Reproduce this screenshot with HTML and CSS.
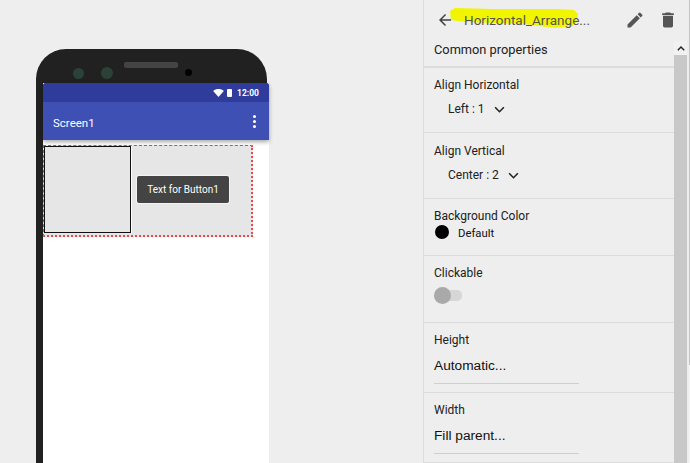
FILE: index.html
```html
<!DOCTYPE html>
<html>
<head>
  <meta charset="utf-8">
  <title>Horizontal Arrangement properties</title>
  <link rel="stylesheet" href="styles.css">
</head>
<body>
  <div class="stage">
    <div class="phone">
      <div class="bezel">
        <span class="cam cam-small"></span>
        <span class="cam cam-big"></span>
        <span class="speaker"></span>
        <span class="lens"></span>
      </div>
      <div class="screen">
        <div class="appbar">
          <div class="statusbar">
            <svg class="wifi" viewBox="0 0 12 9"><path d="M0 2.2C3.4-.7 8.6-.7 12 2.2L6 9z"/></svg>
            <span class="battery"></span>
            <span class="clock">12:00</span>
          </div>
          <div class="toolbar">
            <span class="screen-title">Screen1</span>
            <span class="dots"><i></i><i></i><i></i></span>
          </div>
        </div>
        <div class="arrangement">
          <div class="inner-box"></div>
          <div class="mock-btn">Text for Button1</div>
        </div>
      </div>
    </div>
  </div>

  <div class="panel">
    <div class="panel-head">
      <svg class="head-icon back" viewBox="0 0 24 24"><path d="M20 11H7.83l5.59-5.59L12 4l-8 8 8 8 1.41-1.41L7.83 13H20z"/></svg>
      <span class="comp-name">
        <svg class="marker" viewBox="0 0 132 26"><path d="M2 6L7 3 45 4 110 4 126 5 130 9 128 18 124 21 107 23 76 19 18 17 3 15z"/></svg>
        <span class="comp-text">Horizontal_Arrange...</span>
      </span>
      <svg class="head-icon edit" viewBox="0 0 24 24"><path d="M3 17.25V21h3.75L17.81 9.94l-3.75-3.75L3 17.25zM20.71 7.04a1 1 0 0 0 0-1.41l-2.34-2.34a1 1 0 0 0-1.41 0l-1.83 1.83 3.75 3.75 1.83-1.83z"/></svg>
      <svg class="head-icon trash" viewBox="0 0 24 24"><path d="M6 19c0 1.1.9 2 2 2h8c1.1 0 2-.9 2-2V7H6v12zM19 4h-3.5l-1-1h-5l-1 1H5v2h14V4z"/></svg>
    </div>
    <div class="panel-body">
      <div class="props">
        <div class="prop prop-common">Common properties</div>
        <div class="prop prop-select">
          <div class="prop-label">Align Horizontal</div>
          <div class="select">Left : 1
            <svg class="chev" viewBox="0 0 12 8"><path d="M1 1.5l5 5 5-5"/></svg>
          </div>
        </div>
        <div class="prop prop-select prop-select-tall">
          <div class="prop-label">Align Vertical</div>
          <div class="select">Center : 2
            <svg class="chev" viewBox="0 0 12 8"><path d="M1 1.5l5 5 5-5"/></svg>
          </div>
        </div>
        <div class="prop prop-color">
          <div class="prop-label">Background Color</div>
          <div class="color-row"><span class="swatch"></span><span class="color-name">Default</span></div>
        </div>
        <div class="prop prop-switch">
          <div class="prop-label">Clickable</div>
          <div class="switch"><span class="knob"></span></div>
        </div>
        <div class="prop prop-size">
          <div class="prop-label">Height</div>
          <div class="size-value">Automatic...</div>
        </div>
        <div class="prop prop-size">
          <div class="prop-label">Width</div>
          <div class="size-value">Fill parent...</div>
        </div>
      </div>
      <div class="scrollbar">
        <div class="scroll-up"><svg viewBox="0 0 8 5"><path d="M.8 4.2L4 1l3.2 3.2"/></svg></div>
      </div>
    </div>
  </div>
  <div class="page-scroll"><div class="page-thumb"></div></div>
</body>
</html>
```

FILE: styles.css
```css
html, body {
  height: 100%;
}

body {
  display: flex;
  width: 690px;
  height: 463px;
  margin: 0;
  overflow: hidden;
  background: #eeeeee;
  font-family: Roboto, "Liberation Sans", sans-serif;
  color: #212121;
}

.stage {
  width: 423px;
  flex: none;
  padding: 49px 0 0 36px;
  box-sizing: border-box;
}

.phone {
  width: 231px;
  height: 414px;
  padding: 0 0 0 7px;
  box-sizing: border-box;
  background: #212121;
  border-radius: 30px 30px 0 0;
  box-shadow: 0 0 1px #fff;
}

.bezel {
  position: relative;
  height: 34px;
}

.cam {
  position: absolute;
  border-radius: 50%;
  background: #2b4238;
}

.cam-small {
  left: 30px;
  top: 19px;
  width: 11px;
  height: 11px;
}

.cam-big {
  left: 58px;
  top: 18px;
  width: 12px;
  height: 12px;
}

.speaker {
  position: absolute;
  left: 81px;
  top: 13px;
  width: 54px;
  height: 6px;
  border-radius: 2px;
  background: #444444;
}

.lens {
  position: absolute;
  left: 142px;
  top: 20px;
  width: 7px;
  height: 7px;
  border-radius: 50%;
  background: #000;
}

.screen {
  width: 226px;
  height: 380px;
  background: #fff;
}

.appbar {
  height: 57px;
  border-radius: 3px 3px 0 0;
  background: #3e50b4;
  box-shadow: 0 2px 4px rgba(0, 0, 0, 0.35);
  overflow: hidden;
}

.statusbar {
  display: flex;
  align-items: center;
  justify-content: flex-end;
  height: 19px;
  padding-right: 10px;
  background: #2f3c9c;
  color: #fff;
}

.wifi {
  width: 11px;
  height: 8px;
  fill: #fff;
}

.battery {
  width: 5px;
  height: 8px;
  margin: 0 5px 0 3px;
  border-radius: 1px;
  background: #fff;
}

.clock {
  font-size: 8.5px;
  font-weight: 700;
}

.toolbar {
  display: flex;
  align-items: center;
  justify-content: space-between;
  height: 38px;
  padding: 0 13px 0 10px;
  color: #fff;
}

.screen-title {
  font-size: 11.5px;
  position: relative;
  top: 2px;
}

.dots {
  display: flex;
  flex-direction: column;
  gap: 2px;
}

.dots i {
  display: block;
  width: 3px;
  height: 3px;
  border-radius: 50%;
  background: #fff;
}

.arrangement {
  display: flex;
  align-items: flex-start;
  width: 210px;
  height: 92px;
  margin-top: 5px;
  box-sizing: border-box;
  border: 1px dashed #b9555a;
  border-right: 2px dotted #f6444c;
  border-bottom: 2px dotted #f6444c;
  background: #e6e6e6;
}

.inner-box {
  width: 87px;
  height: 87px;
  flex: none;
  box-sizing: border-box;
  border: 1px solid #111;
  box-shadow: 1px 0 0 #fff;
  background: #e6e6e6;
}

.mock-btn {
  width: 92px;
  height: 27px;
  margin: 30px 0 0 6px;
  box-sizing: border-box;
  border-radius: 2px;
  background: #444444;
  box-shadow: 0 0 0 1px #f4f4f4;
  color: #fff;
  font-size: 10px;
  line-height: 28px;
  text-align: center;
}

.panel {
  width: 264px;
  flex: none;
  display: flex;
  flex-direction: column;
  border-left: 1px solid #dcdcdc;
}

.panel-head {
  display: flex;
  align-items: center;
  height: 41px;
  flex: none;
  padding: 0 0 2px 12px;
  box-sizing: border-box;
}

.head-icon {
  flex: none;
  fill: #555;
}

.back {
  width: 18px;
  height: 18px;
  fill: #424242;
}

.comp-name {
  position: relative;
  width: 160px;
  margin-left: 10px;
  font-size: 13.5px;
  color: #555;
}

.comp-text {
  position: relative;
}

/* highlighter stroke over the component name */
.marker {
  position: absolute;
  left: -16px;
  top: -7px;
  width: 132px;
  height: 26px;
  fill: #f1f500;
}

.edit {
  width: 20px;
  height: 20px;
  margin-left: 1px;
}

.trash {
  width: 20px;
  height: 20px;
  margin-left: 13px;
}

.panel-body {
  flex: 1;
  display: flex;
  min-height: 0;
}

.props {
  width: 250px;
  flex: none;
}

.prop {
  box-sizing: border-box;
  padding-left: 10px;
  border-bottom: 1px solid #dcdcdc;
}

.prop-common {
  height: 27px;
  border-bottom-width: 2px;
  font-size: 12.8px;
  line-height: 17px;
}

.prop-label {
  font-size: 12px;
  line-height: 16px;
}

.prop-select {
  height: 65px;
  padding-top: 9px;
}

.prop-select-tall {
  height: 66px;
  padding-top: 10px;
}

.select {
  display: flex;
  align-items: center;
  margin: 8px 0 0 14px;
  font-size: 12px;
  line-height: 16px;
}

.chev {
  width: 11px;
  height: 7px;
  margin-left: 9px;
  fill: none;
  stroke: #212121;
  stroke-width: 1.8;
}

.prop-color {
  height: 57px;
  padding-top: 9px;
}

.color-row {
  display: flex;
  align-items: center;
}

.swatch {
  width: 14px;
  height: 14px;
  margin-left: 1px;
  border-radius: 50%;
  background: #000;
}

.color-name {
  margin: 3px 0 0 9px;
  font-size: 11.3px;
  color: #111;
}

.prop-switch {
  height: 67px;
  padding-top: 9px;
}

.switch {
  position: relative;
  width: 28px;
  height: 11px;
  margin-top: 9px;
  border-radius: 5px;
  background: #d6d6d6;
}

.knob {
  position: absolute;
  left: 0;
  top: -3px;
  width: 17px;
  height: 17px;
  border-radius: 50%;
  background: #a9a9a9;
}

.prop-size {
  height: 70px;
  padding-top: 9px;
}

.size-value {
  width: 145px;
  height: 27px;
  margin-top: 9px;
  box-sizing: border-box;
  border-bottom: 1px solid #cfcfcf;
  font-family: "Liberation Sans", Arial, sans-serif;
  font-size: 13.7px;
  line-height: 17px;
  color: #111;
}

.scrollbar {
  width: 13px;
  background: #c8c8c8;
}

.scroll-up {
  display: flex;
  align-items: center;
  justify-content: center;
  height: 14px;
  background: #f1f1f1;
}

.scroll-up svg {
  width: 8px;
  height: 5px;
  fill: none;
  stroke: #222;
  stroke-width: 1.4;
}

.page-scroll {
  width: 2px;
  flex: none;
  margin-left: 1px;
  background: #f5f5f5;
}

.page-thumb {
  height: 365px;
  background: #c4c4c4;
}
```
